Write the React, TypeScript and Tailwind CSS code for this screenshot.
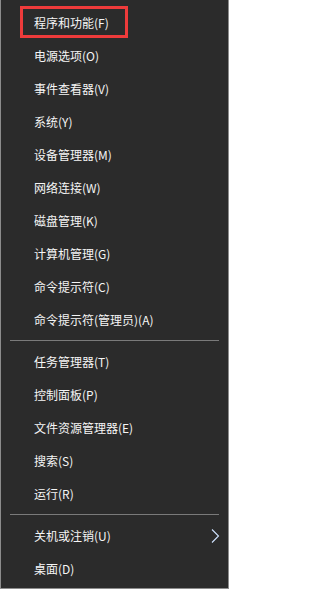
import React from "react";

type Item = { label: string; sub?: boolean; active?: boolean };

const groups: Item[][] = [
  [
    { label: "程序和功能(F)", active: true },
    { label: "电源选项(O)" },
    { label: "事件查看器(V)" },
    { label: "系统(Y)" },
    { label: "设备管理器(M)" },
    { label: "网络连接(W)" },
    { label: "磁盘管理(K)" },
    { label: "计算机管理(G)" },
    { label: "命令提示符(C)" },
    { label: "命令提示符(管理员)(A)" },
  ],
  [
    { label: "任务管理器(T)" },
    { label: "控制面板(P)" },
    { label: "文件资源管理器(E)" },
    { label: "搜索(S)" },
    { label: "运行(R)" },
  ],
  [{ label: "关机或注销(U)", sub: true }, { label: "桌面(D)" }],
];

const MenuRow: React.FC<{ item: Item }> = ({ item }) => (
  <div className="relative flex h-[33px] items-center pl-[33px] pr-2">
    <span className="text-[12px] leading-none text-[#f5f5f5]">{item.label}</span>
    {item.active && (
      <div className="pointer-events-none absolute left-[19px] top-0 h-[32px] w-[108px] border-[3px] border-[#ee3b3b]" />
    )}
    {item.sub && (
      <svg
        className="absolute right-[8px] top-[10px]"
        width="9"
        height="14"
        viewBox="0 0 9 14"
        fill="none"
      >
        <polyline points="1,0.5 7.5,7 1,13.5" stroke="#cfe3ff" strokeWidth="1.1" />
      </svg>
    )}
  </div>
);

export default function App() {
  return (
    <div
      className="flex h-[589px] w-[229px] flex-col border-x border-b border-[#8c8c8c] bg-[#2b2b2b] pt-[6px]"
      style={{ fontFamily: '"Noto Sans CJK SC", "Liberation Sans", sans-serif' }}
    >
      {groups.map((group, gi) => (
        <React.Fragment key={gi}>
          {gi > 0 && (
            <div className="flex h-[9px] items-center px-[9px]">
              <div className="h-px w-full bg-[#7a7a7a]" />
            </div>
          )}
          {group.map((item) => (
            <MenuRow key={item.label} item={item} />
          ))}
        </React.Fragment>
      ))}
    </div>
  );
}
